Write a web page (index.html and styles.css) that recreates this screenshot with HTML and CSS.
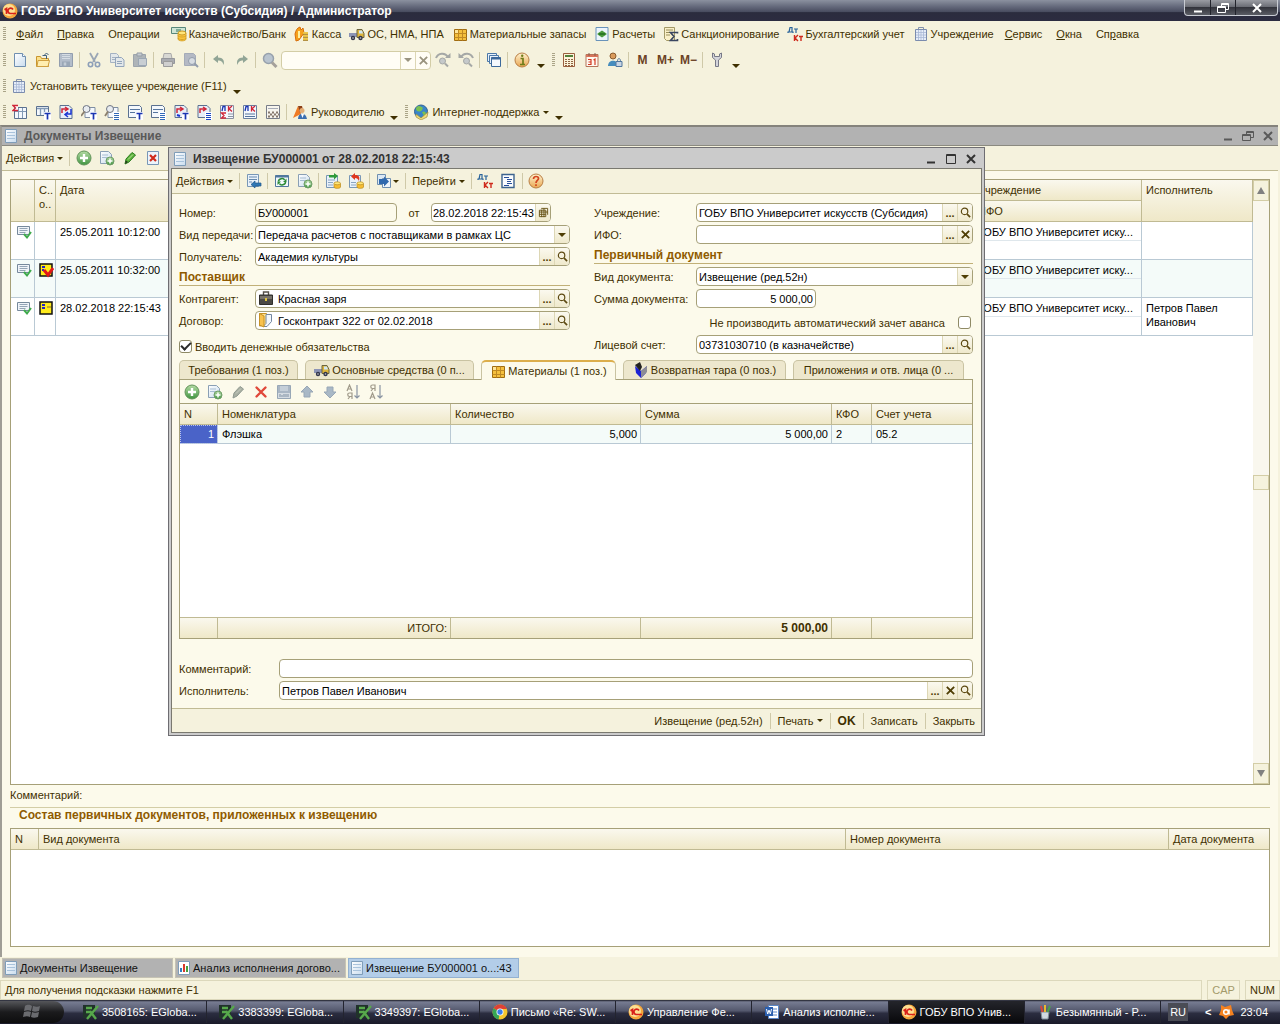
FILE: index.html
```html
<!DOCTYPE html>
<html lang="ru">
<head>
<meta charset="utf-8">
<meta name="viewport" content="width=device-width, initial-scale=1">
<title>ГОБУ ВПО Университет искусств (Субсидия) / Администратор</title>
<link rel="stylesheet" href="styles.css">
</head>
<body>
<svg class="sprite" aria-hidden="true">
  <defs>
    <linearGradient id="g-paper" x1="0" y1="0" x2="1" y2="1"><stop offset="0" stop-color="#fff"/><stop offset="1" stop-color="#c9dcee"/></linearGradient>
    <linearGradient id="g-green" x1="0" y1="0" x2="0" y2="1"><stop offset="0" stop-color="#b5dba5"/><stop offset="1" stop-color="#3f9440"/></linearGradient>
    <linearGradient id="g-amber" x1="0" y1="0" x2="0" y2="1"><stop offset="0" stop-color="#fff3d0"/><stop offset="1" stop-color="#e9a650"/></linearGradient>
  </defs>
  <symbol id="i-onec" viewBox="0 0 16 16"><circle cx="8" cy="8" r="7.500" fill="#f5a63c"/><circle cx="7" cy="7" r="6" fill="#fddf92"/><path d="M2.500 6.800L4.500 5.500V11M11 6.500a2.700 2.700 0 1 0-2.500 4H14" fill="none" stroke="#d8201a" stroke-width="1.700"/></symbol>
  <symbol id="i-page" viewBox="0 0 16 16"><path d="M2.500 1.500h11v13h-11z" fill="url(#g-paper)" stroke="#7f9db9"/><path d="M4 4.500h8M4 7.500h8M4 10.500h8" stroke="#a9c3dc"/></symbol>
  <symbol id="i-new" viewBox="0 0 16 16"><path d="M2.500 1.500h8l3 3v10h-11z" fill="url(#g-paper)" stroke="#6f8fb0"/><path d="M10.500 1.500v3h3" fill="#fff" stroke="#6f8fb0"/></symbol>
  <symbol id="i-open" viewBox="0 0 16 16"><path d="M1.500 14.500v-10h4l1 2h7v8z" fill="#fbe08a" stroke="#c9962f"/><path d="M3 8.500h11.500l-1.500 6h-11z" fill="#ffeeb0" stroke="#d0a040"/><path d="M7.500 3.500h4V7M9.500 3L11.500 1l2 2" fill="none" stroke="#41617f"/></symbol>
  <symbol id="i-save" viewBox="0 0 16 16"><path d="M1.500 1.500h13v13h-13z" fill="#b3bdca" stroke="#929eae"/><path d="M4 2h8v5H4z" fill="#d6dde4"/><path d="M4 9.500h8v5H4z" fill="#9aa7b6"/><path d="M6 10.500h2v3H6zM4 3.500h8M4 5.500h8" fill="#d6dde4" stroke="#b1bcc8"/></symbol>
  <symbol id="i-cut" viewBox="0 0 16 16"><path d="M4 1l5 9M12 1L7 10" stroke="#9aa6b5" stroke-width="1.800"/><circle cx="4.500" cy="12.500" r="2.200" fill="none" stroke="#8d9fb8" stroke-width="1.600"/><circle cx="11.500" cy="12.500" r="2.200" fill="none" stroke="#8d9fb8" stroke-width="1.600"/></symbol>
  <symbol id="i-copy" viewBox="0 0 16 16"><path d="M1.500 1.500h6l2 2v7h-8z" fill="#e3e8ea" stroke="#a5b2c2"/><path d="M3 5.500h4M3 7.500h4" stroke="#a5b2c2"/><path d="M6.500 5.500h6l2.500 2.500v6.500H6.500z" fill="#e3e8ea" stroke="#93a5bb"/><path d="M8 9.500h5M8 11.500h5" stroke="#93a5bb"/></symbol>
  <symbol id="i-paste" viewBox="0 0 16 16"><path d="M1.500 2.500h12v12h-12z" fill="#aeb4b8" stroke="#9da5ac"/><path d="M5 1h5v3H5z" fill="#c6ccd2" stroke="#959da6"/><path d="M6.500 6.500h8v7h-8z" fill="#c8ced3" stroke="#9ba7b4"/></symbol>
  <symbol id="i-print" viewBox="0 0 16 16"><path d="M4 1.500h7l1 5H3z" fill="#d8d8d4" stroke="#aaa"/><path d="M1.500 6.500h13v5h-13z" fill="#a9abb0" stroke="#95979c"/><path d="M3.500 9.500h9v5h-9z" fill="#cfcfcf" stroke="#9c9c9c"/></symbol>
  <symbol id="i-preview" viewBox="0 0 16 16"><path d="M1.500 1.500h9l2 2v10h-11z" fill="#b4b9c4" stroke="#a4abb8"/><circle cx="9" cy="9" r="3.500" fill="#d7dce2" stroke="#929cab"/><path d="M11.500 11.500l3.500 3.500" stroke="#929cab" stroke-width="2"/></symbol>
  <symbol id="i-undo" viewBox="0 0 16 16"><path d="M7 3L2 7l5 4V8.500c3 0 4.500 1 5.500 4.500 1.500-4-.5-7.500-5.500-7.500z" fill="#91a596"/></symbol>
  <symbol id="i-redo" viewBox="0 0 16 16"><path d="M9 3l5 4-5 4V8.500c-3 0-4.500 1-5.500 4.500C2 9 4 5.500 9 5.500z" fill="#91a596"/></symbol>
  <symbol id="i-find" viewBox="0 0 16 16"><circle cx="6.500" cy="6.500" r="5" fill="#b9c4cf" stroke="#97a1ac" stroke-width="1.500"/><path d="M10 10.500l4.500 4.500" stroke="#a5a19b" stroke-width="3"/></symbol>
  <symbol id="i-lens" viewBox="0 0 12 12"><circle cx="5" cy="4.800" r="3.500" fill="none" stroke="#5d4a12" stroke-width="1.300"/><path d="M7.500 7.500L11 11" stroke="#5d4a12" stroke-width="1.800"/></symbol>
  <symbol id="i-findnext" viewBox="0 0 16 16"><path d="M1 6c2-5 9-6 12-1" fill="none" stroke="#a5a8a6" stroke-width="2"/><path d="M10 6h5.500V1z" fill="#a5a8a6"/><circle cx="7.500" cy="9" r="3" fill="#c5c9ca" stroke="#a5a8a6"/><path d="M10 11.500l3 3" stroke="#a5a8a6" stroke-width="2"/></symbol>
  <symbol id="i-findprev" viewBox="0 0 16 16"><path d="M3 5c3-5 10-4 12 1" fill="none" stroke="#a5a8a6" stroke-width="2"/><path d="M6 6H.5V1z" fill="#a5a8a6"/><circle cx="8.500" cy="9" r="3" fill="#c5c9ca" stroke="#a5a8a6"/><path d="M11 11.500l3 3" stroke="#a5a8a6" stroke-width="2"/></symbol>
  <symbol id="i-windows" viewBox="0 0 16 16"><path d="M1.500 1.500h9v8h-9z" fill="#e8f1fa" stroke="#4b78a8"/><path d="M3.500 3.500h9v8h-9z" fill="#e8f1fa" stroke="#4b78a8"/><path d="M5.500 5.500h9v9h-9z" fill="#f5f9fd" stroke="#3c699b"/><path d="M5.500 6.500h9" stroke="#3c699b" stroke-width="2"/></symbol>
  <symbol id="i-info" viewBox="0 0 16 16"><circle cx="8" cy="8" r="7" fill="url(#g-amber)" stroke="#b97f45"/><path d="M6.500 6.500H9v6M6 12.500h5" fill="none" stroke="#6e7d1a" stroke-width="1.700"/><circle cx="8.200" cy="3.800" r="1.200" fill="#6e7d1a"/></symbol>
  <symbol id="i-help" viewBox="0 0 16 16"><circle cx="8" cy="8" r="7" fill="url(#g-amber)" stroke="#b97f45"/><path d="M5.500 6c0-3.500 5-3 5-.5C10.500 7.500 8 7.500 8 10M8 11.300v1.700" fill="none" stroke="#d4451e" stroke-width="1.700"/></symbol>
  <symbol id="i-calc" viewBox="0 0 16 16"><path d="M2.500 1.500h11v13h-11z" fill="#fbf3d9" stroke="#9b5f3f"/><path d="M4 3h8v2H4z" fill="#52803a"/><path d="M4 7.500h8M4 9.500h8M4 11.500h8M4 13.500h8" stroke="#8f6343" stroke-width="1.200" stroke-dasharray="2 1"/></symbol>
  <symbol id="i-calendar" viewBox="0 0 16 16"><path d="M2 2.500h12v12H2z" fill="#fff8ef" stroke="#b4745a"/><path d="M2 3h12v2H2z" fill="#d9745a"/><path d="M4 7.500h3v5H4M4.500 10H7M9.500 8l1.500-1v6" fill="none" stroke="#d33a23" stroke-width="1.200"/><path d="M5 1v3M11 1v3" stroke="#8d5a48"/></symbol>
  <symbol id="i-user" viewBox="0 0 16 16"><circle cx="6" cy="4" r="3" fill="#d99b5c" stroke="#8a5b2e"/><path d="M1 14c0-7 10-7 10 0z" fill="#468dbd"/><path d="M9 9.500h6v5H9z" fill="#c8d5e4" stroke="#52779e"/><path d="M10.500 9.500c0-4 3-4 3 0" fill="none" stroke="#52779e"/></symbol>
  <symbol id="i-wrench" viewBox="0 0 16 16"><path d="M3.500 1v4.500l3 2.500v6.500h3V8l3-2.500V1l-2 1v2.500h-5V2z" fill="#d3d4da" stroke="#777987"/></symbol>
  <symbol id="i-bin" viewBox="0 0 16 16"><path d="M5.500 3V1.500h5V3" fill="none" stroke="#8391ab"/><path d="M2.500 3.500h11v11h-11z" fill="#e6edf8" stroke="#7b8cae"/><path d="M5.500 4v10M8 4v10M10.500 4v10M3 6.500h10M3 9h10M3 11.500h10" stroke="#a8b8d6" stroke-width=".8"/></symbol>
  <symbol id="i-bank" viewBox="0 0 16 16"><path d="M.5 1.500h14v6h-14z" fill="#cfe5d5" stroke="#58877a"/><path d="M5 3h5v3H5z" fill="#81ad98"/><path d="M7 7v6c0 2.500 8 2.500 8 0V7M7 9.500c0 2 8 2 8 0M7 12c0 2 8 2 8 0" fill="#fbc640" stroke="#cf9a20" stroke-width=".8"/><ellipse cx="11" cy="7" rx="4" ry="2" fill="#ffe57a" stroke="#cf9a20"/></symbol>
  <symbol id="i-cash" viewBox="0 0 16 16"><path d="M1 8c1-4 2-6 5-7l1 3 2-2 1 5-5 7-3 1z" fill="#f6a11c" stroke="#d76f0d"/><path d="M5 5v7" stroke="#fff0a0" stroke-width="2"/><path d="M9 7.500h5M9 10.500h5M9 13.500h5" stroke="#9d7212" stroke-width="2.400"/><path d="M9 7h5M9 10h5M9 13h5" stroke="#ffda52" stroke-width="1.300"/></symbol>
  <symbol id="i-truck" viewBox="0 0 16 16"><path d="M0 7h8v4H0z" fill="#8c94b5"/><path d="M8 3.500h5l2 4v4H8z" fill="#dcb43c" stroke="#6c653e"/><path d="M10 4.500h3l1 3h-4z" fill="#cfe6f4"/><circle cx="4" cy="12" r="2.200" fill="#33364b"/><circle cx="11.500" cy="12" r="2.200" fill="#33364b"/><circle cx="4" cy="12" r=".8" fill="#ccc"/><circle cx="11.500" cy="12" r=".8" fill="#ccc"/></symbol>
  <symbol id="i-crate" viewBox="0 0 16 16"><path d="M2.500 3.500h12v11h-12z" fill="#f5c03e" stroke="#a06c12"/><path d="M2.500 7.500h12M6.500 3.500v11M10.500 3.500v11M2.500 11.500h12" stroke="#c08a24"/><path d="M3 4h3v3H3z" fill="#ffe69a"/></symbol>
  <symbol id="i-calcdoc" viewBox="0 0 16 16"><path d="M2 1.500h12v13H2z" fill="#edf5fc" stroke="#6993ba"/><path d="M3.500 7.500L8 4.500l4.500 3v1L8 11.500 3.500 8.500z" fill="#4c9b3e"/><path d="M5 8h6" stroke="#226d21" stroke-width="1.500"/></symbol>
  <symbol id="i-sanction" viewBox="0 0 16 16"><path d="M1.500 1.500h10v13h-8l-2-2z" fill="#faf0c8" stroke="#a39966"/><path d="M3 4h7M3 6.500h5M3 9h4" stroke="#9a905c"/><path d="M14.500 7.500V6.500h-7l3.500 4-3.500 4h7v-1.500" fill="none" stroke="#3a4660" stroke-width="1.600"/></symbol>
  <symbol id="i-dtkt" viewBox="0 0 16 16"><path d="M1 7V6h5v1M2 6l1-4.500h2V6M7 3h4M9 3v4" fill="none" stroke="#27629a" stroke-width="1.200"/><path d="M7.500 9v6M11 9l-3 3 3 3M12 10.500h4M14 10.500V15" fill="none" stroke="#cf2a1c" stroke-width="1.400"/></symbol>
  <symbol id="i-tab-sum" viewBox="0 0 16 16"><path d="M2.500 3.500h12v11h-12z" fill="#f4f8fd" stroke="#5b7190"/><path d="M6.500 4v10M10.500 4v10M3 7.500h11" stroke="#8199b5"/><path d="M6 1.500H1L3.500 4 1 6.500h5" fill="#fff" stroke="#d02638" stroke-width="1.300"/></symbol>
  <symbol id="i-tab-t" viewBox="0 0 16 16"><path d="M1.500 2.500h12v9h-12z" fill="#f4f8fd" stroke="#5b7190"/><path d="M2 4.500h11M5.500 5v6M9.500 5v6" stroke="#8199b5" stroke-width="1.300"/><path d="M9 8h7v8H9z" fill="#fff"/><path d="M9.500 9.500h6M12.500 9v6.500" stroke="#1a35b2" stroke-width="1.700"/></symbol>
  <symbol id="i-exch" viewBox="0 0 16 16"><path d="M2 1.500h9l3 3v10H2z" fill="#e8eef7" stroke="#5b7190"/><path d="M4 9V5h5M7 3l3 2-3 2" fill="none" stroke="#d02638" stroke-width="1.500"/><path d="M13 5v5H8M10 8l-3 2.500L10 13" fill="none" stroke="#1a35d2" stroke-width="1.500"/></symbol>
  <symbol id="i-lens-t" viewBox="0 0 16 16"><path d="M4 3.500h10v10H4z" fill="#f4f8fd" stroke="#7f8ea3"/><circle cx="5.500" cy="5" r="3.500" fill="#e8ecf0" stroke="#707684"/><path d="M3.500 7.500L0 12" stroke="#8b7f6c" stroke-width="1.800"/><path d="M9 8h7v8H9z" fill="#fff"/><path d="M9.500 9.500h6M12.500 9v6.500" stroke="#1a35b2" stroke-width="1.700"/></symbol>
  <symbol id="i-lens-l" viewBox="0 0 16 16"><path d="M4 3.500h10v10H4z" fill="#f4f8fd" stroke="#7f8ea3"/><circle cx="6" cy="5" r="3.500" fill="#e8ecf0" stroke="#707684"/><path d="M4 7.500L1 12" stroke="#8b7f6c" stroke-width="1.800"/><path d="M9 8h7v8H9z" fill="#fff"/><path d="M10 9.500h5M10 11.500h5M10 13.500h5M10 15.500h5" stroke="#3269b8"/></symbol>
  <symbol id="i-doc-t" viewBox="0 0 16 16"><path d="M1.500 1.500h11l2 2v10h-13z" fill="#f4f8fd" stroke="#5b7190"/><path d="M3 5.500h10M3 8.500h5" stroke="#56759e"/><path d="M9 8h7v8H9z" fill="#fff"/><path d="M9.500 9.500h6M12.500 9v6.500" stroke="#1a35b2" stroke-width="1.700"/></symbol>
  <symbol id="i-doc-l" viewBox="0 0 16 16"><path d="M1.500 1.500h11l2 2v10h-13z" fill="#f4f8fd" stroke="#5b7190"/><path d="M3 5.500h10M3 8.500h5" stroke="#56759e"/><path d="M9 8h7v8H9z" fill="#fff"/><path d="M10 9.500h5M10 11.500h5M10 13.500h5M10 15.500h5" stroke="#3269b8"/></symbol>
  <symbol id="i-exch-t" viewBox="0 0 16 16"><path d="M2 1.500h9l3 3v9H2z" fill="#e8eef7" stroke="#5b7190"/><path d="M4 9V5h5M7 3l3 2-3 2" fill="none" stroke="#d02638" stroke-width="1.500"/><path d="M4 11l3 1" stroke="#1a35d2" stroke-width="2"/><path d="M9 8h7v8H9z" fill="#fff"/><path d="M9.500 9.500h6M12.500 9v6.500" stroke="#1a35b2" stroke-width="1.700"/></symbol>
  <symbol id="i-exch-l" viewBox="0 0 16 16"><path d="M2 1.500h9l3 3v9H2z" fill="#e8eef7" stroke="#5b7190"/><path d="M4 9V5h5M7 3l3 2-3 2" fill="none" stroke="#d02638" stroke-width="1.500"/><path d="M9 8h7v8H9z" fill="#fff"/><path d="M10 9.500h5M10 11.500h5M10 13.500h5M10 15.500h5" stroke="#1a45c2"/></symbol>
  <symbol id="i-dk-sum" viewBox="0 0 16 16"><path d="M1.500 1.500h13v13h-13z" fill="#f4f8fd" stroke="#8a8fa0"/><path d="M3 7l1-4.500h2V7" fill="none" stroke="#1a35b2" stroke-width="1.300"/><path d="M9.500 2v5.500M13 2l-3 2.700 3 2.800" fill="none" stroke="#d02638" stroke-width="1.300"/><path d="M7 9H2.500L5 11.500 2.500 14H7" fill="none" stroke="#d02638" stroke-width="1.300"/><path d="M9 10h5M9 12.500h5" stroke="#8b93a5"/></symbol>
  <symbol id="i-dk" viewBox="0 0 16 16"><path d="M1.500 1.500h13v13h-13z" fill="#f4f8fd" stroke="#6a7fa0"/><path d="M3 7l1-4.500h2V7" fill="none" stroke="#1a35b2" stroke-width="1.300"/><path d="M9.500 2v5.500M13 2l-3 2.700 3 2.800" fill="none" stroke="#d02638" stroke-width="1.300"/><path d="M3 10h10M3 12.500h10" stroke="#56759e"/></symbol>
  <symbol id="i-chess" viewBox="0 0 16 16"><path d="M1.500 1.500h13v13h-13z" fill="#f7f5ee" stroke="#777c88"/><path d="M3 4.500h10" stroke="#a7acb8"/><path d="M3 8.500h10M3 12.500h10" stroke="#87796d" stroke-width="2" stroke-dasharray="2 2"/><path d="M5 10.500h9" stroke="#87796d" stroke-width="2" stroke-dasharray="2 2"/></symbol>
  <symbol id="i-boss" viewBox="0 0 16 16"><path d="M1 14L6 2l3 8z" fill="#f07b24"/><path d="M6 2h4l1 4-3 3z" fill="#8d3f17"/><circle cx="10" cy="6.500" r="2.500" fill="#e3ad75"/><path d="M6 15c0-7 8-7 9 0z" fill="#3c6fb0"/><path d="M9 10l1.500 4L12 10z" fill="#fff"/></symbol>
  <symbol id="i-globe" viewBox="0 0 16 16"><circle cx="8" cy="7.500" r="6.500" fill="#3985c8" stroke="#2f6193"/><path d="M3 4c3-4 5-1 6-1s1 3-1 4-5 1-5-3zM9 8c4-2 5 2 2 4z" fill="#7bc152"/><path d="M3 10l5 4 7-6-1 5-6 3-5-3z" fill="#f3dc7a" stroke="#9e8f3d" stroke-width=".7"/></symbol>
  <symbol id="i-add" viewBox="0 0 16 16"><circle cx="8" cy="8" r="7" fill="url(#g-green)" stroke="#62945a"/><path d="M8 4v8M4 8h8" stroke="#fff" stroke-width="2.400"/></symbol>
  <symbol id="i-addcopy" viewBox="0 0 16 16"><path d="M1.500 1.500h8l3 3v9h-11z" fill="url(#g-paper)" stroke="#8a9fb4"/><path d="M3 5h6M3 7.500h5" stroke="#a7bdd2"/><circle cx="11" cy="11" r="4" fill="url(#g-green)" stroke="#6f9d68"/><path d="M11 8.500v5M8.500 11h5" stroke="#fff" stroke-width="1.500"/></symbol>
  <symbol id="i-edit" viewBox="0 0 16 16"><path d="M3 14l1-5 6-6.500L13.500 5 7 12z" fill="#5cb33c" stroke="#2b7c1f"/><path d="M3 14l1-3.500L6 12z" fill="#27381e"/><path d="M6 9.500l5-5" stroke="#b8e39b"/></symbol>
  <symbol id="i-editoff" viewBox="0 0 16 16"><path d="M3 14l1-5 6-6.500L13.500 5 7 12z" fill="#a9b0a3" stroke="#8f9990"/><path d="M6 9.500l5-5" stroke="#c9cec2"/></symbol>
  <symbol id="i-deldoc" viewBox="0 0 16 16"><path d="M2.500 1.500h11v13h-11z" fill="#edf4fb" stroke="#7897b6"/><path d="M5 5l6 6M11 5l-6 6" stroke="#d02a1a" stroke-width="2.200"/></symbol>
  <symbol id="i-del" viewBox="0 0 16 16"><path d="M3.500 3.500l9 9M12.500 3.500l-9 9" stroke="#e0483a" stroke-width="2.400" stroke-linecap="round"/></symbol>
  <symbol id="i-up" viewBox="0 0 16 16"><path d="M8 2l6 6h-3v5H5V8H2z" fill="#a9b8c6" stroke="#98a7b6"/></symbol>
  <symbol id="i-down" viewBox="0 0 16 16"><path d="M8 14L2 8h3V3h6v5h3z" fill="#a9b8c6" stroke="#98a7b6"/></symbol>
  <symbol id="i-sortaz" viewBox="0 0 16 16"><path d="M2 7l2.500-6L7 7M3 5h3M7 15V9H4.500a1.500 1.500 0 0 0 0 3.500H7M5 12.500L3 15" fill="none" stroke="#a09a8a" stroke-width="1.200"/><path d="M12 1v13M9.500 11.500L12 14l2.500-2.500" fill="none" stroke="#8a94a2" stroke-width="1.200"/></symbol>
  <symbol id="i-sortza" viewBox="0 0 16 16"><path d="M2 15l2.500-6L7 15M3 13h3M7 7V1H4.500a1.500 1.500 0 0 0 0 3.500H7M5 4.500L3 7" fill="none" stroke="#a09a8a" stroke-width="1.200"/><path d="M12 1v13M9.500 11.500L12 14l2.500-2.500" fill="none" stroke="#8a94a2" stroke-width="1.200"/></symbol>
  <symbol id="i-posted" viewBox="0 0 16 16"><path d="M1.500 2.500h12v8h-12z" fill="#f0f4f9" stroke="#76899c"/><path d="M3.500 4.500h8M3.500 6.500h8M3.500 8.500h6" stroke="#94a5b6"/><path d="M8 10l3 3.500L15 8" fill="none" stroke="#3faa4c" stroke-width="2"/></symbol>
  <symbol id="i-flag" viewBox="0 0 16 16"><path d="M2 2h12v12H2z" fill="#ffeb1c" stroke="#111" stroke-width="1.500"/><path d="M4 5h3M4 8h3" stroke="#2525c4" stroke-width="2"/><path d="M9 7h4" stroke="#b0952a" stroke-width="1.500"/></symbol>
  <symbol id="i-flagcheck" viewBox="0 0 16 16"><path d="M2 2h12v12H2z" fill="#ffeb1c" stroke="#111" stroke-width="1.500"/><path d="M4 5h3M4 8h2" stroke="#2525c4" stroke-width="2"/><path d="M6 8l4 5 5-7" fill="none" stroke="#e21818" stroke-width="3"/></symbol>
  <symbol id="i-gotolist" viewBox="0 0 16 16"><path d="M1.500 1.500h11v12h-11z" fill="#e9f1fa" stroke="#7897b6"/><path d="M3 4h8M3 6.500h8M3 9h3" stroke="#6689ae"/><path d="M5 11.500L9 8v2h6v3H9v2z" fill="#2f77b5" stroke="#23598b" stroke-width=".7"/></symbol>
  <symbol id="i-refresh" viewBox="0 0 16 16"><path d="M1.500 2.500h13v11h-13z" fill="#f2f8fc" stroke="#52789e"/><path d="M1.500 3.500h13" stroke="#52789e" stroke-width="2"/><path d="M4.500 8.500c0-3 5-4 6-1.500M11.500 9c0 3-5 4-6 1.500" fill="none" stroke="#2d8b37" stroke-width="1.600"/><path d="M12.500 5.500V9H9zM3.500 12V8.500H7z" fill="#2d8b37"/></symbol>
  <symbol id="i-post" viewBox="0 0 16 16"><path d="M1.500 2.500h11v12h-11z" fill="#e9f1fa" stroke="#7897b6"/><path d="M3 7h7M3 9.500h5M3 12h5" stroke="#8aa6c3"/><path d="M4 2h5V0l4 3-4 3.500V4.500H4z" fill="#2f9a3a"/><path d="M9 10.500v3.500c0 1.800 6.500 1.800 6.500 0v-3.500" fill="#f7bd32" stroke="#b98a1b" stroke-width=".7"/><ellipse cx="12.200" cy="10.300" rx="3.200" ry="1.500" fill="#ffe77a" stroke="#b98a1b" stroke-width=".7"/></symbol>
  <symbol id="i-unpost" viewBox="0 0 16 16"><path d="M1.500 2.500h11v12h-11z" fill="#e9f1fa" stroke="#7897b6"/><path d="M3 9.500h5M3 12h5" stroke="#8aa6c3"/><path d="M3 3.500L7 0v2c4 0 5 2 4 6-1-2-2-3-4-3v2z" fill="#e0371e"/><path d="M9 10.500v3.500c0 1.800 6.500 1.800 6.500 0v-3.500" fill="#f7bd32" stroke="#b98a1b" stroke-width=".7"/><ellipse cx="12.200" cy="10.300" rx="3.200" ry="1.500" fill="#ffe77a" stroke="#b98a1b" stroke-width=".7"/></symbol>
  <symbol id="i-based" viewBox="0 0 16 16"><path d="M1.500 1.500h8v10h-8z" fill="#dbe8f4" stroke="#6f8fb0"/><path d="M6.500 5.500h8v9h-8z" fill="#edf4fb" stroke="#6f8fb0"/><path d="M3 6h5V3.500l5 5-5 5V11H3z" fill="#2f68ad"/></symbol>
  <symbol id="i-tree" viewBox="0 0 16 16"><path d="M2 1.500h12v13H2z" fill="#fafcfe" stroke="#3c638e" stroke-width="1.400"/><path d="M4 4.500h5M7 6.500h5M7 8.500h4M7 10.500h5M4 12.500h5" stroke="#274f9a"/></symbol>
  <symbol id="i-case" viewBox="0 0 16 16"><path d="M5.500 5V2h5v3" fill="none" stroke="#55504a" stroke-width="1.400"/><path d="M1.500 5h13v9.500h-13z" fill="#4b4944" stroke="#2f2e2c"/><path d="M2 6h12v3H2z" fill="#77736b"/><path d="M7 8h2v3H7z" fill="#e1c63d"/></symbol>
  <symbol id="i-contract" viewBox="0 0 16 16"><path d="M1.500 1.500h7v12l-7 .5z" fill="#ffe18b" stroke="#c69227"/><path d="M8 2.500h5.500v7L9 14.500H5l3-3z" fill="#f3f7fb" stroke="#7386a0"/><path d="M1.500 1.500L6 4v11l-4.500-2z" fill="#f9c24d" stroke="#c69227"/></symbol>
  <symbol id="i-tara" viewBox="0 0 16 16"><path d="M2 4l6 5 6-5-1 7-5 5-5-5z" fill="#1c22d6"/><path d="M2 3l5-3 2 5-2 4z" fill="#222"/><path d="M14 4l-6 5v7l6-6z" fill="#8c8c95"/></symbol>
  <symbol id="i-datepick" viewBox="0 0 12 12"><path d="M3.500 1.500h7v7M1.500 3.500h7v7h-7zM1.500 5.500h9M1.500 8h7M4 3v8M6.500 1.500V11" fill="none" stroke="#665114"/></symbol>
  <symbol id="i-savelist" viewBox="0 0 16 16"><path d="M1.500 1.500h13v13h-13z" fill="#a9b6c4" stroke="#98a7b6"/><path d="M4 2h8v5H4z" fill="#c4ced8"/><path d="M2 9h12v5H2z" fill="#d5dce2"/><path d="M4 13v-3M6 13v-2M8 13v-3M10 13v-3M12 13v-3" stroke="#94a2b2" stroke-width="1.300"/></symbol>
  <symbol id="i-report" viewBox="0 0 16 16"><path d="M2.500 1.500h11v13h-11z" fill="#fff" stroke="#7f9db9"/><path d="M5 12V8" stroke="#2f7ec0" stroke-width="2"/><path d="M8 12V4" stroke="#d93a2b" stroke-width="2"/><path d="M11 12V6" stroke="#46a03d" stroke-width="2"/></symbol>
  <symbol id="i-eglobal" viewBox="0 0 16 16"><path d="M0 1h12v13H0z" fill="#20322a"/><path d="M3 4h6M3 8h5M4 15L15 2M7 7l6 8" stroke="#57a84c" stroke-width="2.400"/></symbol>
  <symbol id="i-chrome" viewBox="0 0 16 16"><circle cx="8" cy="8" r="7.500" fill="#f5c52f"/><path d="M8 8L1.500 4.300A7.500 7.500 0 0 1 14.900 5H8z" fill="#de4236"/><path d="M8 8l-1.500 7.400A7.500 7.500 0 0 1 1.500 4.300z" fill="#37a655"/><circle cx="8" cy="8" r="3.500" fill="#fff"/><circle cx="8" cy="8" r="2.700" fill="#3b7ee8"/></symbol>
  <symbol id="i-word" viewBox="0 0 16 16"><path d="M4.500 1.500h10v13h-10z" fill="#fff" stroke="#5a86c6"/><path d="M9 5h4M9 8h4M9 11h4" stroke="#5a86c6"/><path d="M1 3h8v9H1z" fill="#2b5fae"/><path d="M2.500 5l1.200 5L5 6l1.300 4L7.500 5" fill="none" stroke="#fff"/></symbol>
  <symbol id="i-paint" viewBox="0 0 16 16"><path d="M4 8h8l-1 7H5z" fill="#cfd9df" stroke="#7e8d96"/><path d="M5.500 8L4 2" stroke="#d9453a" stroke-width="2"/><path d="M8 8V1" stroke="#e9b92f" stroke-width="2"/><path d="M10.500 8L13 2" stroke="#4aa04b" stroke-width="2"/></symbol>
  <symbol id="i-avast" viewBox="0 0 16 16"><path d="M3 1l4 2 6-2 1 5 2 5-5 1-3 3-3-3-4-1 2-5z" fill="#f58220"/><circle cx="8" cy="8" r="2.300" fill="none" stroke="#fff" stroke-width="1.500"/><path d="M11 5.500v5" stroke="#fff" stroke-width="1.500"/></symbol>
  <symbol id="i-winflag" viewBox="0 0 20 18"><path d="M3 3c3-2 5-1 7 0L9 8C7 7 5 7 2 8zM11 3c3 1 5 1 7 0l-1 5c-3 1-5 1-7 0zM2 9c3-1 5-1 7 0l-1 5c-2-1-4-1-7 0zM10 9c2 1 4 1 7 0l-1 5c-3 1-5 1-7 0z" fill="#6a6b6f"/></symbol>
  <symbol id="i-min" viewBox="0 0 12 12"><path d="M2 9.500h8" stroke="currentColor" stroke-width="2"/></symbol>
  <symbol id="i-max" viewBox="0 0 12 12"><path d="M1.500 1.500h9v9h-9zM1 2.500h10" fill="none" stroke="currentColor"/></symbol>
  <symbol id="i-restore" viewBox="0 0 12 12"><path d="M4.500 4V1.500h7v6H9M.5 4.500h8v6h-8zM.5 5.500h8M4.500 2.500h7" fill="none" stroke="currentColor"/></symbol>
  <symbol id="i-close" viewBox="0 0 12 12"><path d="M2 2l8 8M10 2l-8 8" stroke="currentColor" stroke-width="2"/></symbol>
</svg>

<header class="titlebar">
  <svg class="icon"><use href="#i-onec"/></svg>
  <h1 class="titlebar-text">ГОБУ ВПО Университет искусств (Субсидия) / Администратор</h1>
  <div class="sysbuttons">
    <button class="sysbutton" aria-label="Свернуть"><svg class="glyph"><use href="#i-min"/></svg></button>
    <button class="sysbutton" aria-label="Восстановить"><svg class="glyph"><use href="#i-restore"/></svg></button>
    <button class="sysbutton sysbutton-close" aria-label="Закрыть окно"><svg class="glyph"><use href="#i-close"/></svg></button>
  </div>
</header>

<nav class="bar menubar">
  <span class="grip"></span>
  <button class="menu menu-text"><u>Ф</u>айл</button>
  <button class="menu menu-text"><u>П</u>равка</button>
  <button class="menu menu-text">Операции</button>
  <button class="menu"><svg class="icon"><use href="#i-bank"/></svg>Казначейство/Банк</button>
  <button class="menu"><svg class="icon"><use href="#i-cash"/></svg>Касса</button>
  <button class="menu"><svg class="icon"><use href="#i-truck"/></svg>ОС, НМА, НПА</button>
  <button class="menu"><svg class="icon"><use href="#i-crate"/></svg>Материальные запасы</button>
  <button class="menu"><svg class="icon"><use href="#i-calcdoc"/></svg>Расчеты</button>
  <button class="menu"><svg class="icon"><use href="#i-sanction"/></svg>Санкционирование</button>
  <button class="menu"><svg class="icon"><use href="#i-dtkt"/></svg>Бухгалтерский учет</button>
  <button class="menu"><svg class="icon"><use href="#i-bin"/></svg>Учреждение</button>
  <button class="menu menu-text"><u>С</u>ервис</button>
  <button class="menu menu-text"><u>О</u>кна</button>
  <button class="menu menu-text">Сп<u>р</u>авка</button>
</nav>

<div class="bar">
  <span class="grip"></span>
  <button class="tool" aria-label="Новый"><svg class="icon"><use href="#i-new"/></svg></button>
  <button class="tool" aria-label="Открыть"><svg class="icon"><use href="#i-open"/></svg></button>
  <button class="tool" aria-label="Сохранить" disabled><svg class="icon"><use href="#i-save"/></svg></button>
  <span class="sep"></span>
  <button class="tool" aria-label="Вырезать" disabled><svg class="icon"><use href="#i-cut"/></svg></button>
  <button class="tool" aria-label="Копировать" disabled><svg class="icon"><use href="#i-copy"/></svg></button>
  <button class="tool" aria-label="Вставить" disabled><svg class="icon"><use href="#i-paste"/></svg></button>
  <span class="sep"></span>
  <button class="tool" aria-label="Печать" disabled><svg class="icon"><use href="#i-print"/></svg></button>
  <button class="tool" aria-label="Просмотр" disabled><svg class="icon"><use href="#i-preview"/></svg></button>
  <span class="sep"></span>
  <button class="tool" aria-label="Отменить" disabled><svg class="icon"><use href="#i-undo"/></svg></button>
  <button class="tool" aria-label="Вернуть" disabled><svg class="icon"><use href="#i-redo"/></svg></button>
  <span class="sep"></span>
  <button class="tool" aria-label="Найти" disabled><svg class="icon"><use href="#i-find"/></svg></button>
  <div class="field field-search">
    <input class="input" type="text" aria-label="Строка поиска" disabled>
    <button class="fbtn" aria-label="История поиска" disabled><span class="caret"></span></button>
    <button class="fbtn" aria-label="Очистить поиск" disabled><svg class="glyph"><use href="#i-close"/></svg></button>
  </div>
  <button class="tool" aria-label="Найти следующий" disabled><svg class="icon"><use href="#i-findnext"/></svg></button>
  <button class="tool" aria-label="Найти предыдущий" disabled><svg class="icon"><use href="#i-findprev"/></svg></button>
  <span class="sep"></span>
  <button class="tool" aria-label="Окна"><svg class="icon"><use href="#i-windows"/></svg></button>
  <span class="sep"></span>
  <button class="tool" aria-label="Сведения"><svg class="icon"><use href="#i-info"/></svg></button>
  <button class="more" aria-label="Ещё"><span class="caret caret-big"></span></button>
  <span class="grip"></span>
  <button class="tool" aria-label="Калькулятор"><svg class="icon"><use href="#i-calc"/></svg></button>
  <button class="tool" aria-label="Календарь"><svg class="icon"><use href="#i-calendar"/></svg></button>
  <button class="tool" aria-label="Пользователи"><svg class="icon"><use href="#i-user"/></svg></button>
  <span class="sep"></span>
  <button class="tool tool-memory">M</button>
  <button class="tool tool-memory">M+</button>
  <button class="tool tool-memory">M−</button>
  <span class="sep"></span>
  <button class="tool" aria-label="Настройка"><svg class="icon"><use href="#i-wrench"/></svg></button>
  <button class="more" aria-label="Ещё"><span class="caret caret-big"></span></button>
</div>

<div class="bar">
  <span class="grip"></span>
  <button class="menu menu-wide"><svg class="icon"><use href="#i-bin"/></svg>Установить текущее учреждение (F11)</button>
  <button class="more" aria-label="Ещё"><span class="caret caret-big"></span></button>
</div>

<div class="bar">
  <span class="grip"></span>
  <button class="tool" aria-label="Оборотно-сальдовая ведомость"><svg class="icon"><use href="#i-tab-sum"/></svg></button>
  <button class="tool" aria-label="Ведомость по счету"><svg class="icon"><use href="#i-tab-t"/></svg></button>
  <button class="tool" aria-label="Обороты"><svg class="icon"><use href="#i-exch"/></svg></button>
  <button class="tool" aria-label="Анализ счета"><svg class="icon"><use href="#i-lens-t"/></svg></button>
  <button class="tool" aria-label="Анализ субконто"><svg class="icon"><use href="#i-lens-l"/></svg></button>
  <button class="tool" aria-label="Карточка счета"><svg class="icon"><use href="#i-doc-t"/></svg></button>
  <button class="tool" aria-label="Карточка субконто"><svg class="icon"><use href="#i-doc-l"/></svg></button>
  <button class="tool" aria-label="Обороты счета"><svg class="icon"><use href="#i-exch-t"/></svg></button>
  <button class="tool" aria-label="Обороты субконто"><svg class="icon"><use href="#i-exch-l"/></svg></button>
  <button class="tool" aria-label="Сводные проводки"><svg class="icon"><use href="#i-dk-sum"/></svg></button>
  <button class="tool" aria-label="Отчет по проводкам"><svg class="icon"><use href="#i-dk"/></svg></button>
  <button class="tool" aria-label="Шахматка"><svg class="icon"><use href="#i-chess"/></svg></button>
  <span class="sep"></span>
  <button class="menu menu-wide"><svg class="icon"><use href="#i-boss"/></svg>Руководителю</button>
  <button class="more" aria-label="Ещё"><span class="caret caret-big"></span></button>
  <span class="grip"></span>
  <button class="menu menu-wide"><svg class="icon"><use href="#i-globe"/></svg>Интернет-поддержка<span class="caret caret-near"></span></button>
  <button class="more" aria-label="Ещё"><span class="caret caret-big"></span></button>
</div>

<main class="workspace">
  <section class="journal">
    <div class="journal-title">
      <svg class="icon"><use href="#i-page"/></svg>
      <h2 class="window-name">Документы Извещение</h2>
      <div class="window-buttons">
        <button class="wbtn" aria-label="Свернуть журнал"><svg class="glyph"><use href="#i-min"/></svg></button>
        <button class="wbtn" aria-label="Восстановить журнал"><svg class="glyph"><use href="#i-restore"/></svg></button>
        <button class="wbtn" aria-label="Закрыть журнал"><svg class="glyph"><use href="#i-close"/></svg></button>
      </div>
    </div>
    <div class="toolbar">
      <button class="action">Действия<span class="caret"></span></button>
      <span class="sep"></span>
      <button class="tool" aria-label="Добавить"><svg class="icon"><use href="#i-add"/></svg></button>
      <button class="tool" aria-label="Добавить копированием"><svg class="icon"><use href="#i-addcopy"/></svg></button>
      <button class="tool" aria-label="Изменить"><svg class="icon"><use href="#i-edit"/></svg></button>
      <button class="tool" aria-label="Пометить на удаление"><svg class="icon"><use href="#i-deldoc"/></svg></button>
    </div>
    <div class="journal-body">
      <div class="list">
        <table class="grid grid-journal">
          <colgroup><col class="w24"><col class="w21"><col class="w120"><col><col class="w168"><col class="w111"></colgroup>
          <thead>
            <tr><th rowspan="2"></th><th rowspan="2">С..<br>о..</th><th rowspan="2">Дата</th><th rowspan="2"></th><th>Учреждение</th><th rowspan="2">Исполнитель</th></tr>
            <tr><th>ИФО</th></tr>
          </thead>
          <tbody>
            <tr><td class="mark"><svg class="icon"><use href="#i-posted"/></svg></td><td class="mark"></td><td>25.05.2011 10:12:00</td><td></td><td class="split"><div class="split-top">ГОБУ ВПО Университет иску...</div></td><td></td></tr>
            <tr class="alt"><td class="mark"><svg class="icon"><use href="#i-posted"/></svg></td><td class="mark"><svg class="icon"><use href="#i-flagcheck"/></svg></td><td>25.05.2011 10:32:00</td><td></td><td class="split"><div class="split-top">ГОБУ ВПО Университет иску...</div></td><td></td></tr>
            <tr><td class="mark"><svg class="icon"><use href="#i-posted"/></svg></td><td class="mark"><svg class="icon"><use href="#i-flag"/></svg></td><td>28.02.2018 22:15:43</td><td></td><td class="split"><div class="split-top">ГОБУ ВПО Университет иску...</div></td><td>Петров Павел Иванович</td></tr>
          </tbody>
        </table>
        <div class="scroll">
          <button class="scroll-end" aria-label="Вверх"><span class="caret caret-up"></span></button>
          <span class="scroll-thumb"></span>
          <button class="scroll-end" aria-label="Вниз"><span class="caret caret-grey"></span></button>
        </div>
      </div>
      <p class="note">Комментарий:</p>
      <h3 class="group group-top">Состав первичных документов, приложенных к извещению</h3>
      <div class="list list-docs">
        <table class="grid grid-docs">
          <colgroup><col class="w28"><col><col class="w323"><col class="w100"></colgroup>
          <thead><tr><th>N</th><th>Вид документа</th><th>Номер документа</th><th>Дата документа</th></tr></thead>
        </table>
      </div>
    </div>
  </section>

  <form class="dialog" onsubmit="return false">
    <div class="dialog-title">
      <svg class="icon"><use href="#i-page"/></svg>
      <h2 class="window-name">Извещение БУ000001 от 28.02.2018 22:15:43</h2>
      <div class="window-buttons">
        <button type="button" class="wbtn" aria-label="Свернуть"><svg class="glyph"><use href="#i-min"/></svg></button>
        <button type="button" class="wbtn" aria-label="Развернуть"><svg class="glyph"><use href="#i-max"/></svg></button>
        <button type="button" class="wbtn" aria-label="Закрыть извещение"><svg class="glyph"><use href="#i-close"/></svg></button>
      </div>
    </div>
    <div class="dialog-inner">
      <div class="toolbar">
        <button type="button" class="action">Действия<span class="caret"></span></button>
        <span class="sep"></span>
        <button type="button" class="tool" aria-label="Найти в списке"><svg class="icon"><use href="#i-gotolist"/></svg></button>
        <span class="sep"></span>
        <button type="button" class="tool" aria-label="Перечитать"><svg class="icon"><use href="#i-refresh"/></svg></button>
        <button type="button" class="tool" aria-label="Скопировать"><svg class="icon"><use href="#i-addcopy"/></svg></button>
        <span class="sep"></span>
        <button type="button" class="tool" aria-label="Провести"><svg class="icon"><use href="#i-post"/></svg></button>
        <button type="button" class="tool" aria-label="Отменить проведение"><svg class="icon"><use href="#i-unpost"/></svg></button>
        <span class="sep"></span>
        <button type="button" class="action action-icon" aria-label="Ввести на основании"><svg class="icon"><use href="#i-based"/></svg><span class="caret"></span></button>
        <span class="sep"></span>
        <button type="button" class="action">Перейти<span class="caret"></span></button>
        <span class="sep"></span>
        <button type="button" class="tool" aria-label="Проводки"><svg class="icon"><use href="#i-dtkt"/></svg></button>
        <button type="button" class="tool" aria-label="Структура"><svg class="icon"><use href="#i-tree"/></svg></button>
        <span class="sep"></span>
        <button type="button" class="tool" aria-label="Справка"><svg class="icon"><use href="#i-help"/></svg></button>
      </div>

      <div class="form">
        <div class="form-cols">
          <div class="col col-left">
            <div class="row">
              <label class="label" for="number">Номер:</label>
              <div class="field field-number field-locked"><input class="input" id="number" value="БУ000001" readonly></div>
              <label class="from" for="date">от</label>
              <div class="field field-date"><input class="input" id="date" value="28.02.2018 22:15:43"><button type="button" class="fbtn" aria-label="Выбрать дату"><svg class="glyph"><use href="#i-datepick"/></svg></button></div>
            </div>
            <div class="row">
              <label class="label" for="kind">Вид передачи:</label>
              <div class="field"><select class="input" id="kind"><option>Передача расчетов с поставщиками в рамках ЦС</option></select><span class="fbtn"><span class="caret"></span></span></div>
            </div>
            <div class="row">
              <label class="label" for="receiver">Получатель:</label>
              <div class="field"><input class="input" id="receiver" value="Академия культуры"><button type="button" class="fbtn">...</button><button type="button" class="fbtn" aria-label="Открыть получателя"><svg class="glyph"><use href="#i-lens"/></svg></button></div>
            </div>
            <h3 class="group">Поставщик</h3>
            <div class="row">
              <label class="label" for="partner">Контрагент:</label>
              <div class="field"><svg class="icon field-icon"><use href="#i-case"/></svg><input class="input" id="partner" value="Красная заря"><button type="button" class="fbtn">...</button><button type="button" class="fbtn" aria-label="Открыть контрагента"><svg class="glyph"><use href="#i-lens"/></svg></button></div>
            </div>
            <div class="row">
              <label class="label" for="contract">Договор:</label>
              <div class="field"><svg class="icon field-icon"><use href="#i-contract"/></svg><input class="input" id="contract" value="Госконтракт 322 от 02.02.2018"><button type="button" class="fbtn">...</button><button type="button" class="fbtn" aria-label="Открыть договор"><svg class="glyph"><use href="#i-lens"/></svg></button></div>
            </div>
            <div class="row row-check">
              <input class="check" type="checkbox" id="oblig" checked>
              <label for="oblig">Вводить денежные обязательства</label>
            </div>
          </div>
          <div class="col col-right">
            <div class="row">
              <label class="label" for="org">Учреждение:</label>
              <div class="field"><input class="input" id="org" value="ГОБУ ВПО Университет искусств (Субсидия)"><button type="button" class="fbtn">...</button><button type="button" class="fbtn" aria-label="Открыть учреждение"><svg class="glyph"><use href="#i-lens"/></svg></button></div>
            </div>
            <div class="row">
              <label class="label" for="ifo">ИФО:</label>
              <div class="field"><input class="input" id="ifo"><button type="button" class="fbtn">...</button><button type="button" class="fbtn" aria-label="Очистить ИФО"><svg class="glyph"><use href="#i-close"/></svg></button></div>
            </div>
            <h3 class="group">Первичный документ</h3>
            <div class="row">
              <label class="label" for="doctype">Вид документа:</label>
              <div class="field"><select class="input" id="doctype"><option>Извещение (ред.52н)</option></select><span class="fbtn"><span class="caret"></span></span></div>
            </div>
            <div class="row">
              <label class="label" for="sum">Сумма документа:</label>
              <div class="field field-sum"><input class="input num" id="sum" value="5 000,00"></div>
            </div>
            <div class="row row-advance">
              <label for="advance">Не производить автоматический зачет аванса</label>
              <input class="check" type="checkbox" id="advance">
            </div>
            <div class="row">
              <label class="label" for="account">Лицевой счет:</label>
              <div class="field"><input class="input" id="account" value="03731030710 (в казначействе)"><button type="button" class="fbtn">...</button><button type="button" class="fbtn" aria-label="Открыть лицевой счет"><svg class="glyph"><use href="#i-lens"/></svg></button></div>
            </div>
          </div>
        </div>

        <div class="tabs">
          <button type="button" class="tab tab-1">Требования (1 поз.)</button>
          <button type="button" class="tab tab-2"><svg class="icon"><use href="#i-truck"/></svg>Основные средства (0 п...</button>
          <button type="button" class="tab tab-3 tab-on"><svg class="icon"><use href="#i-crate"/></svg>Материалы (1 поз.)</button>
          <button type="button" class="tab tab-4"><svg class="icon"><use href="#i-tara"/></svg>Возвратная тара (0 поз.)</button>
          <button type="button" class="tab tab-5">Приложения и отв. лица (0 ...</button>
        </div>
        <div class="panel">
          <div class="panel-tools">
            <button type="button" class="tool" aria-label="Добавить строку"><svg class="icon"><use href="#i-add"/></svg></button>
            <button type="button" class="tool" aria-label="Скопировать строку"><svg class="icon"><use href="#i-addcopy"/></svg></button>
            <button type="button" class="tool" aria-label="Изменить строку"><svg class="icon"><use href="#i-editoff"/></svg></button>
            <button type="button" class="tool" aria-label="Удалить строку"><svg class="icon"><use href="#i-del"/></svg></button>
            <button type="button" class="tool" aria-label="Закончить редактирование" disabled><svg class="icon"><use href="#i-savelist"/></svg></button>
            <button type="button" class="tool" aria-label="Строку вверх" disabled><svg class="icon"><use href="#i-up"/></svg></button>
            <button type="button" class="tool" aria-label="Строку вниз" disabled><svg class="icon"><use href="#i-down"/></svg></button>
            <button type="button" class="tool" aria-label="По возрастанию" disabled><svg class="icon"><use href="#i-sortaz"/></svg></button>
            <button type="button" class="tool" aria-label="По убыванию" disabled><svg class="icon"><use href="#i-sortza"/></svg></button>
          </div>
          <table class="grid grid-items">
            <colgroup><col class="w38"><col><col class="w190"><col class="w191"><col class="w40"><col class="w100"></colgroup>
            <thead><tr><th>N</th><th>Номенклатура</th><th>Количество</th><th>Сумма</th><th>КФО</th><th>Счет учета</th></tr></thead>
            <tbody>
              <tr class="alt"><td class="num picked">1</td><td>Флэшка</td><td class="num">5,000</td><td class="num">5 000,00</td><td>2</td><td>05.2</td></tr>
              <tr class="filler"><td colspan="6"></td></tr>
            </tbody>
            <tfoot><tr><th></th><th class="num">ИТОГО:</th><th></th><th class="num total">5 000,00</th><th></th><th></th></tr></tfoot>
          </table>
        </div>

        <div class="bottom">
          <div class="row">
            <label class="label label-bottom" for="comment">Комментарий:</label>
            <div class="field"><input class="input" id="comment"></div>
          </div>
          <div class="row">
            <label class="label label-bottom" for="executor">Исполнитель:</label>
            <div class="field"><input class="input" id="executor" value="Петров Павел Иванович"><button type="button" class="fbtn">...</button><button type="button" class="fbtn" aria-label="Очистить исполнителя"><svg class="glyph"><use href="#i-close"/></svg></button><button type="button" class="fbtn" aria-label="Открыть исполнителя"><svg class="glyph"><use href="#i-lens"/></svg></button></div>
          </div>
        </div>
      </div>

      <div class="commands">
        <button type="button" class="cmd">Извещение (ред.52н)</button>
        <span class="sep"></span>
        <button type="button" class="cmd">Печать<span class="caret"></span></button>
        <span class="sep"></span>
        <button type="submit" class="cmd cmd-ok">OK</button>
        <span class="sep"></span>
        <button type="button" class="cmd">Записать</button>
        <span class="sep"></span>
        <button type="button" class="cmd">Закрыть</button>
      </div>
    </div>
  </form>
</main>

<div class="winbar">
  <button class="wintab"><svg class="icon"><use href="#i-page"/></svg>Документы Извещение</button>
  <button class="wintab"><svg class="icon"><use href="#i-report"/></svg>Анализ исполнения догово...</button>
  <button class="wintab wintab-on"><svg class="icon"><use href="#i-page"/></svg>Извещение БУ000001 о...:43</button>
</div>

<div class="status">
  <span class="status-text">Для получения подсказки нажмите F1</span>
  <span class="status-key status-off">CAP</span>
  <span class="status-key">NUM</span>
</div>

<footer class="taskbar">
  <button class="start" aria-label="Пуск"><svg class="start-flag"><use href="#i-winflag"/></svg></button>
  <div class="tasks">
    <button class="task"><svg class="icon"><use href="#i-eglobal"/></svg>3508165: EGloba...</button>
    <button class="task"><svg class="icon"><use href="#i-eglobal"/></svg>3383399: EGloba...</button>
    <button class="task"><svg class="icon"><use href="#i-eglobal"/></svg>3349397: EGloba...</button>
    <button class="task"><svg class="icon"><use href="#i-chrome"/></svg>Письмо «Re: SW...</button>
    <button class="task"><svg class="icon"><use href="#i-onec"/></svg>Управление Фе...</button>
    <button class="task"><svg class="icon"><use href="#i-word"/></svg>Анализ исполне...</button>
    <button class="task task-on"><svg class="icon"><use href="#i-onec"/></svg>ГОБУ ВПО Унив...</button>
    <button class="task"><svg class="icon"><use href="#i-paint"/></svg>Безымянный - P...</button>
  </div>
  <span class="lang">RU</span>
  <span class="tray-arrow">&lt;</span>
  <svg class="icon"><use href="#i-avast"/></svg>
  <time class="clock">23:04</time>
</footer>
</body>
</html>
```
FILE: styles.css
```css
:root {
  --bar: #f5f2dd;
  --form: #fcfaeb;
  --line: #a6a078;
  --soft: #d3cda6;
  --text: #3f3000;
  --cell: #b9c9d4;
  --head: linear-gradient(#faf8ee, #efe8c8);
}

* { box-sizing: border-box; }

body {
  margin: 0;
  min-height: 100vh;
  display: flex;
  flex-direction: column;
  background: var(--bar);
  color: var(--text);
  font: 11px/14px "Liberation Sans", Arial, sans-serif;
}

h1, h2, h3, p { margin: 0; font-size: inherit; }

button, input, select { font: inherit; color: inherit; margin: 0; }

button {
  display: flex;
  align-items: center;
  justify-content: center;
  padding: 0;
  border: 0;
  background: none;
  white-space: nowrap;
}

.sprite { position: absolute; width: 0; height: 0; }
.icon { width: 16px; height: 16px; flex: none; }
.glyph { width: 12px; height: 12px; flex: none; }

/* carets */
.caret {
  flex: none;
  margin-left: 3px;
  border: 3px solid transparent;
  border-top-color: currentColor;
  border-bottom: 0;
}
.caret-near { margin-left: 0; }
.caret-big { border-width: 4px; border-bottom: 0; margin: 12px 0 0; }
.caret-grey { border-width: 7px 4px 0; border-top-color: #808080; margin: 0; }
.caret-up { border: 4px solid transparent; border-top: 0; border-bottom: 7px solid #808080; margin: 0; }

/* application title */
.titlebar {
  display: flex;
  align-items: center;
  gap: 3px;
  height: 21px;
  padding: 0 2px;
  background: linear-gradient(#8b919f 0, #666b7d 30%, #4a4e61 55%, #2b2c3e 60%, #2c2c40 100%);
  color: #fff;
}
.titlebar-text { flex: 1; font-size: 12px; }
.sysbuttons {
  display: flex;
  align-self: flex-start;
  height: 16px;
  border: 1px solid #c9ccd3;
  border-top: 0;
  border-radius: 0 0 4px 4px;
  background: linear-gradient(#9a9ca3, #6b6d75 45%, #33343c 50%, #5a5c64);
}
.sysbutton { width: 25px; color: #fff; }
.sysbutton + .sysbutton { border-left: 1px solid #22232b; }
.sysbutton-close { width: 42px; }

/* toolbars */
.bar { display: flex; align-items: center; height: 26px; }
.grip {
  width: 3px;
  height: 14px;
  margin: 0 2px 0 3px;
  background: repeating-linear-gradient(#aaa487 0 1px, transparent 1px 2px);
}
.menubar { gap: 8px; }
.menubar .grip { margin-right: -1px; }
.menu { gap: 2px; }
.menu-text { padding: 0 3px; gap: 0; }
.menu-wide { gap: 3px; padding: 0 2px 0 3px; }
.tool { width: 23px; height: 22px; }
.tool-memory { color: #6b4226; font-weight: bold; font-size: 12px; }
.more { width: 16px; height: 22px; }
.sep {
  width: 1px;
  height: 16px;
  margin: 0 2px;
  background: #cfc9a8;
}

/* fields */
.field {
  display: flex;
  align-items: stretch;
  flex: 1;
  min-width: 0;
  height: 19px;
  border: 1px solid var(--line);
  border-radius: 4px;
  background: #fff;
  color: #000;
  overflow: hidden;
}
.input {
  flex: 1;
  min-width: 0;
  width: 100%;
  padding: 0 2px;
  border: 0;
  outline: 0;
  background: none;
  appearance: none;
}
.fbtn {
  display: flex;
  align-items: center;
  justify-content: center;
  flex: none;
  width: 15px;
  border-left: 1px solid #ddd7b5;
  background: linear-gradient(#fbf9ef, #efe9cc);
  color: #4f3e05;
  font-weight: bold;
}
.fbtn .caret { margin: 0; border-width: 4px; border-bottom: 0; }
.fbtn .glyph { width: 11px; height: 11px; }
.field-icon { margin: 0 2px; }
.field-locked { background: var(--form); }
.field-number { flex: none; width: 142px; }
.field-date { flex: none; width: 120px; margin-right: 19px; }
.field-date .input { padding: 0 1px; }
.field-sum { flex: none; width: 120px; }
.field-search { flex: none; width: 150px; border-color: var(--soft); background: #fffdf5; }
.field-search .fbtn { color: #9a9480; background: none; }
.num { text-align: right; }

/* workspace and journal */
.workspace { position: relative; flex: 1; display: flex; flex-direction: column; }
.journal {
  flex: 1;
  display: flex;
  flex-direction: column;
  margin-right: 2px;
  border-top: 2px solid #85837c;
  border-left: 2px solid #a09e96;
  background: var(--form);
}
.journal-title, .dialog-title { display: flex; align-items: center; gap: 5px; }
.journal-title {
  height: 19px;
  padding: 0 2px 0 1px;
  background: #b2b2b2;
  border-bottom: 1px solid #8b8a80;
  color: #595959;
}
.window-name { flex: 1; font-size: 12px; }
.window-buttons { display: flex; gap: 4px; }
.wbtn { width: 16px; height: 16px; }
.toolbar {
  display: flex;
  align-items: center;
  height: 25px;
  background: var(--bar);
  border-bottom: 1px solid #c1bb95;
}
.action { height: 22px; padding: 0 4px; }
.action-icon .caret { margin-left: 1px; }
.journal-body { flex: 1; display: flex; flex-direction: column; padding: 8px 8px 10px; }
.list {
  flex: 1;
  display: flex;
  align-items: flex-start;
  border: 1px solid var(--line);
  background: #fff;
}
.list-docs { flex: none; height: 119px; margin-top: 6px; }
.note { padding: 3px 0 5px; }
.group { color: #8f5a00; font-weight: bold; font-size: 12px; }
.group-top { border-top: 1px solid var(--soft); padding-left: 9px; }

/* tables */
.grid { flex: 1; width: 100%; table-layout: fixed; border-collapse: separate; border-spacing: 0; color: #000; }
.grid th {
  height: 21px;
  padding: 3px 4px;
  text-align: left;
  vertical-align: top;
  font-weight: normal;
  color: var(--text);
  background: var(--head);
  border-right: 1px solid #c0ba93;
  border-bottom: 1px solid #c0ba93;
}
.grid td {
  padding: 3px 4px;
  vertical-align: top;
  border-right: 1px solid var(--cell);
  border-bottom: 1px solid var(--cell);
}
.grid .num { text-align: right; padding-right: 3px; }
.grid .alt td { background: #f4fbf9; }
.grid-journal td { height: 38px; }
.grid .mark { padding: 2px 3px; }
.grid .mark .icon { display: block; margin-left: 2px; }
.grid .mark + .mark .icon { margin-left: 0; }
.grid .split { padding: 0; }
.split-top { height: 19px; padding: 3px 4px; border-bottom: 1px solid #dfe7ec; white-space: nowrap; overflow: hidden; }
.grid-docs th:last-child, .grid-items tr > :last-child { border-right: 0; }
.grid-items td { height: 19px; padding: 2px 4px; }
.grid .filler td { height: 173px; border-bottom: 0; }
.grid-items tfoot th { height: 21px; border-top: 1px solid #c0ba93; border-bottom: 0; }
.grid .total { font-weight: bold; font-size: 12px; }
.grid-items .alt .picked { background: #4a63c8; color: #fff; outline: 1px dotted #b9c4ee; outline-offset: -1px; }

.w21 { width: 21px; } .w24 { width: 24px; } .w28 { width: 28px; } .w38 { width: 38px; }
.w40 { width: 40px; } .w100 { width: 100px; } .w111 { width: 111px; } .w120 { width: 120px; }
.w168 { width: 168px; } .w190 { width: 190px; } .w191 { width: 191px; } .w323 { width: 323px; }

.scroll {
  align-self: stretch;
  display: flex;
  flex-direction: column;
  justify-content: space-between;
  width: 16px;
  background: #f9f7ee;
}
.scroll-end, .scroll-thumb { width: 16px; height: 21px; background: var(--bar); border: 1px solid var(--soft); }
.scroll-thumb { height: 15px; }

/* document dialog */
.dialog {
  position: absolute;
  left: 168px;
  top: 22px;
  width: 817px;
  padding: 1px 2px 2px;
  border: 1px solid #6e6d72;
  background: #cbcbcb;
}
.dialog-title { height: 19px; padding: 0 3px 0 1px; color: #333; }
.dialog-inner { border: 1px solid #7a7970; background: var(--form); }
.form { padding: 9px 8px 8px 7px; }
.form-cols { display: flex; gap: 24px; }
.col { display: flex; flex-direction: column; gap: 3px; }
.col-left { flex: 391; }
.col-right { flex: 379; }
.row { display: flex; align-items: center; height: 19px; }
.label { flex: none; width: 76px; white-space: nowrap; }
.col-right .label { width: 102px; }
.label-bottom { width: 100px; }
.from { flex: 1; text-align: center; }
.col .group { height: 17px; border-bottom: 1px solid #c1b078; line-height: 16px; }
.row-check { margin-top: 4px; gap: 3px; }
.row-advance { justify-content: flex-end; gap: 13px; margin: 2px 2px 0 0; }
.check {
  flex: none;
  display: grid;
  place-items: center;
  appearance: none;
  width: 13px;
  height: 13px;
  border: 1px solid #8f8a66;
  border-radius: 3px;
  background: #fff;
}
.check:checked::before {
  content: "";
  width: 8px;
  height: 4px;
  margin-bottom: 3px;
  border: solid #2b2b2b;
  border-width: 0 0 2px 2px;
  transform: rotate(-45deg);
}

.tabs { display: flex; gap: 7px; margin-top: 4px; }
.tab {
  height: 19px;
  gap: 2px;
  background: #ede7cd;
  border: 1px solid #c9c3a2;
  border-bottom: 0;
  border-radius: 5px 5px 0 0;
}
.tab-on { background: var(--form); border-top: 2px solid #dcae4c; height: 20px; margin-bottom: -1px; z-index: 1; }
.tab-1 { width: 119px; } .tab-2 { width: 169px; } .tab-3 { width: 135px; }
.tab-4 { width: 163px; } .tab-5 { width: 171px; }
.panel { border: 1px solid var(--line); background: #fff; }
.panel-tools { display: flex; align-items: center; height: 24px; background: var(--form); border-bottom: 1px solid var(--line); }
.bottom { display: flex; flex-direction: column; gap: 3px; margin-top: 20px; }
.commands {
  display: flex;
  align-items: center;
  justify-content: flex-end;
  height: 24px;
  padding-right: 1px;
  background: var(--bar);
  border-top: 1px solid #c1bb95;
}
.cmd { height: 20px; padding: 0 5px; }
.cmd-ok { font-weight: bold; font-size: 12px; }

/* open windows and status line */
.winbar { display: flex; gap: 2px; height: 23px; padding: 1px 2px 2px; }
.wintab { width: 171px; height: 20px; gap: 1px; justify-content: flex-start; background: #b2b2b2; border: 1px solid #c6c3b4; color: #111; }
.wintab-on { background: #b3cde8; border-color: #93b1d1; }
.status { display: flex; gap: 5px; height: 20px; }
.status-text, .status-key { padding: 2px 4px; border: 1px solid #dcd8bc; }
.status-text { flex: 1; }
.status-off { color: #a39a6b; }

/* system taskbar */
.taskbar {
  display: flex;
  align-items: center;
  height: 24px;
  padding-right: 12px;
  background: linear-gradient(#1b1c26 0, #777c92 8%, #54586d 45%, #2b2d40 55%, #191a29 100%);
  color: #fff;
}
.start { width: 64px; height: 22px; border-radius: 0 12px 12px 0; background: linear-gradient(#55565a, #1b1b1d 50%, #0d0d0e); }
.start-flag { width: 20px; height: 18px; }
.tasks { flex: 1; display: flex; margin-left: 7px; }
.task {
  flex: 1;
  min-width: 0;
  height: 22px;
  gap: 3px;
  padding-left: 12px;
  justify-content: flex-start;
  overflow: hidden;
  border-right: 1px solid #23242f;
}
.task-on { background: linear-gradient(#24252b, #08080b); }
.lang { padding: 2px; margin: 0 17px 0 7px; background: #4a4c55; }
.tray-arrow { font-weight: bold; margin-right: 7px; }
.clock { margin-left: 6px; }
```
